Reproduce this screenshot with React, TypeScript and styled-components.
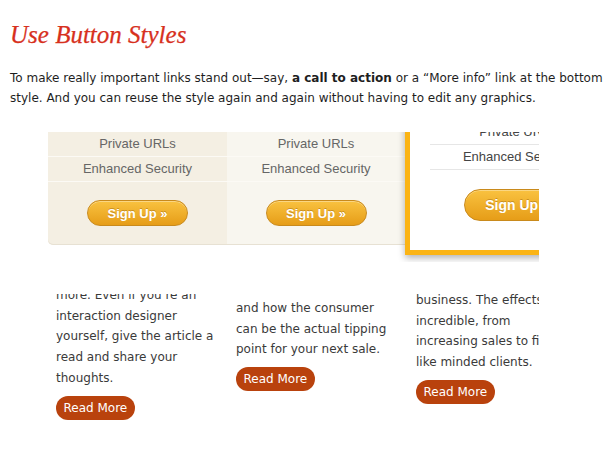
import React from 'react'
import styled, { createGlobalStyle } from 'styled-components'

const GlobalStyle = createGlobalStyle`
  html, body {
    margin: 0;
    background: #fff;
  }
  body {
    overflow: hidden;
  }
`

const Page = styled.div`
  width: 615px;
  height: 450px;
  padding: 0 10px;
  box-sizing: border-box;
  overflow: hidden;
  font-family: 'DejaVu Sans', Verdana, sans-serif;
`

const Title = styled.h2`
  margin: 0;
  padding-top: 20px;
  font-family: 'Liberation Serif', Georgia, serif;
  font-style: italic;
  font-weight: normal;
  font-size: 25px;
  line-height: 30px;
  color: #d7301d;
  -webkit-text-stroke: 0.25px #d7301d;
`

const Intro = styled.p`
  margin: 18px 0 0;
  font-size: 12px;
  line-height: 20px;
  color: #1e1e1e;
  white-space: nowrap;

  strong {
    font-weight: bold;
  }
`

const PricingShot = styled.div`
  margin: 24px 0 0 38px;
  width: 491px;
  height: 130px;
  overflow: hidden;
  display: flex;
  align-items: flex-start;
  font-family: 'Liberation Sans', Arial, sans-serif;
`

const Plan = styled.div<{ $tone: string; $width: number; $rounded?: boolean }>`
  flex: 0 0 ${(p) => p.$width}px;
  background: ${(p) => p.$tone};
  border-radius: 0 0 0 ${(p) => (p.$rounded ? '5px' : '0')};
  box-shadow: inset 0 -1px 0 #e7e1d3;
`

const Feature = styled.div`
  height: 24px;
  line-height: 24px;
  text-align: center;
  font-size: 13px;
  color: #666;
  border-bottom: 1px solid #fcfaf5;
`

const ButtonArea = styled.div<{ $top: number; $bottom: number }>`
  display: flex;
  justify-content: center;
  padding: ${(p) => p.$top}px 0 ${(p) => p.$bottom}px;
`

const SignUp = styled.button<{ $big?: boolean }>`
  width: ${(p) => (p.$big ? 107 : 101)}px;
  height: ${(p) => (p.$big ? 32 : 26)}px;
  padding: 0;
  border: 1px solid #c98a1c;
  border-radius: 16px;
  background: linear-gradient(#f9c240, #e69d18);
  box-shadow: inset 0 1px 0 rgba(255, 255, 255, 0.35);
  font-family: 'Liberation Sans', Arial, sans-serif;
  font-weight: bold;
  font-size: ${(p) => (p.$big ? 14 : 13)}px;
  color: #fff;
  text-shadow: 0 -1px 0 rgba(120, 70, 0, 0.35);
  text-align: center;
`

const Featured = styled.div`
  flex: 0 0 225px;
  margin-top: -17px;
  box-sizing: border-box;
  background: #fff;
  border: 5px solid #fbb415;
  box-shadow: 0 3px 7px rgba(0, 0, 0, 0.3);
`

const FeaturedRow = styled.div`
  margin: 0 20px;
  height: 24px;
  line-height: 24px;
  text-align: center;
  font-size: 13px;
  color: #444;
  border-bottom: 1px solid #e6e6e6;
`

const CardsShot = styled.div`
  margin: 32px 0 0 38px;
  width: 491px;
  height: 136px;
  overflow: hidden;
  display: grid;
  grid-template-columns: repeat(3, 180px);
  align-items: start;
  padding-left: 8px;
  box-sizing: border-box;
`

const Card = styled.div<{ $offset: number }>`
  margin-top: ${(p) => p.$offset}px;
  font-size: 12px;
  line-height: 20.7px;
  color: #3a3a3a;
  white-space: nowrap;
`

const ReadMore = styled.span`
  display: inline-block;
  margin-top: 7px;
  height: 24px;
  padding: 0 7.5px;
  border-radius: 12px;
  background: #b9420d;
  color: #fff;
  font-size: 12px;
  line-height: 24px;
`

const plans = [
  { tone: '#f4efe3', width: 179, rounded: true },
  { tone: '#f8f6ef', width: 178, rounded: false },
]

const cards = [
  {
    offset: -9,
    lines: ['more. Even if you’re an', 'interaction designer', 'yourself, give the article a', 'read and share your', 'thoughts.'],
  },
  {
    offset: 4,
    lines: ['and how the consumer', 'can be the actual tipping', 'point for your next sale.'],
  },
  {
    offset: -4,
    lines: ['business. The effects can be', 'incredible, from', 'increasing sales to finding', 'like minded clients.'],
  },
]

export default function App() {
  return (
    <Page>
      <GlobalStyle />
      <Title>Use Button Styles</Title>
      <Intro>
        To make really important links stand out—say, <strong>a call to action</strong> or a “More info” link at the bottom
        <br />
        style. And you can reuse the style again and again without having to edit any graphics.
      </Intro>

      <PricingShot>
        {plans.map((plan, i) => (
          <Plan key={i} $tone={plan.tone} $width={plan.width} $rounded={plan.rounded}>
            <Feature>Private URLs</Feature>
            <Feature>Enhanced Security</Feature>
            <ButtonArea $top={18} $bottom={19}>
              <SignUp>Sign Up »</SignUp>
            </ButtonArea>
          </Plan>
        ))}
        <Featured>
          <FeaturedRow>Private URLs</FeaturedRow>
          <FeaturedRow>Enhanced Security</FeaturedRow>
          <ButtonArea $top={19} $bottom={29}>
            <SignUp $big>Sign Up »</SignUp>
          </ButtonArea>
        </Featured>
      </PricingShot>

      <CardsShot>
        {cards.map((card, i) => (
          <Card key={i} $offset={card.offset}>
            {card.lines.map((line) => (
              <div key={line}>{line}</div>
            ))}
            <ReadMore>Read More</ReadMore>
          </Card>
        ))}
      </CardsShot>
    </Page>
  )
}
